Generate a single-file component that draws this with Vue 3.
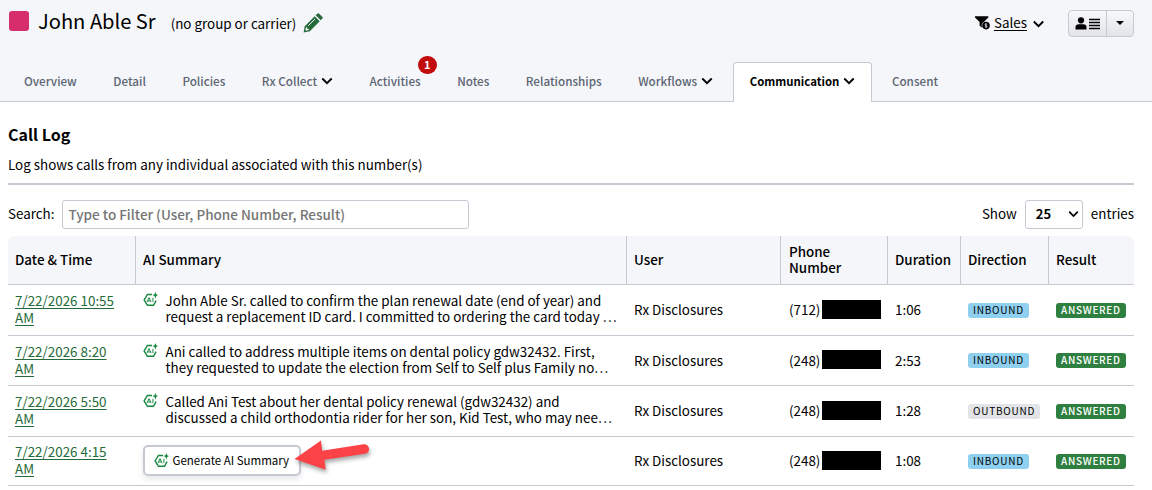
<script setup>
import { ref, computed } from 'vue'

const tabs = [
    { name: 'Overview' },
    { name: 'Detail' },
    { name: 'Policies' },
    { name: 'Rx Collect', menu: true },
    { name: 'Activities', count: 1 },
    { name: 'Notes' },
    { name: 'Relationships' },
    { name: 'Workflows', menu: true },
    { name: 'Communication', menu: true },
    { name: 'Consent' }
]
const activeTab = ref('Communication')
const search = ref('')

const calls = [
    {
        date: '7/22/2026 10:55 AM',
        summary: ['John Able Sr. called to confirm the plan renewal date (end of year) and', 'request a replacement ID card. I committed to ordering the card today …'],
        user: 'Rx Disclosures', area: '(712)', duration: '1:06', direction: 'INBOUND', result: 'ANSWERED'
    },
    {
        date: '7/22/2026 8:20 AM',
        summary: ['Ani called to address multiple items on dental policy gdw32432. First,', 'they requested to update the election from Self to Self plus Family no…'],
        user: 'Rx Disclosures', area: '(248)', duration: '2:53', direction: 'INBOUND', result: 'ANSWERED'
    },
    {
        date: '7/22/2026 5:50 AM',
        summary: ['Called Ani Test about her dental policy renewal (gdw32432) and', 'discussed a child orthodontia rider for her son, Kid Test, who may nee…'],
        user: 'Rx Disclosures', area: '(248)', duration: '1:28', direction: 'OUTBOUND', result: 'ANSWERED'
    },
    {
        date: '7/22/2026 4:15 AM',
        summary: null,
        user: 'Rx Disclosures', area: '(248)', duration: '1:08', direction: 'INBOUND', result: 'ANSWERED'
    }
]

// Filter by user, phone number or result
const filtered = computed(() => {
    const q = search.value.toLowerCase()
    return calls.filter(c => `${c.user} ${c.area} ${c.result}`.toLowerCase().includes(q))
})
</script>

<template>
    <div class="page">
        <svg class="defs" width="0" height="0">
            <symbol id="ai" viewBox="0 0 16 16">
                <path d="M9.600 2.600H4.700L1.200 8.400l3.500 5.800h6.500L14 9.300" fill="none" stroke="currentColor" stroke-width="1.500" />
                <path d="M4.200 10.800l2-4.600h.4l2 4.600M5.100 9.500h2.700M10.600 6.200v4.600" fill="none" stroke="currentColor" stroke-width="1.050" />
                <path d="M13.200 0l.9 2.500 1.900.8-1.900.9-.9 2.900-.9-2.900-2.300-.9 2.300-.8z" fill="currentColor" />
            </symbol>
            <symbol id="chevron" viewBox="0 0 12 8">
                <path d="M1.300 1.500L6 6.200l4.700-4.700" fill="none" stroke="currentColor" stroke-width="1.900" />
            </symbol>
        </svg>

        <header class="top">
            <div class="title-row">
                <span class="swatch"></span>
                <h1>John Able Sr</h1>
                <span class="carrier">(no group or carrier)</span>
                <svg class="pencil" viewBox="0 0 20 20">
                    <path d="M.6 19.400l1.200-6.200L11.700 3.300l5 5-9.900 9.900z" fill="#256b3a" />
                    <path d="M12.700 2.300L14.200.8q1-1 2 0l3 3q1 1 0 2l-1.500 1.500z" fill="#256b3a" />
                    <path d="M3 14.200l1.100.2.300 1.300 1.300.300.200 1.100-2.700.600-.8-.8z" fill="#f5f6f9" />
                    <path d="M5.200 12.800L12 6" stroke="#f5f6f9" stroke-width="1" />
                </svg>
                <div class="actions">
                    <svg class="funnel" viewBox="0 0 15 14">
                        <path d="M0 .3h13.300v1.200L9.300 5.500a4.300 4.300 0 0 0-2 6.300L4.600 9.800V5.900L0 1.500z" fill="#000" />
                        <circle cx="11" cy="9.600" r="3.800" fill="#000" />
                        <path d="M12.200 8.300c-.7-.6-2.200-.5-2.200.4 0 1 2.200.6 2.200 1.700 0 .9-1.600 1-2.400.3M11 7.200v4.800" fill="none" stroke="#f5f6f9" stroke-width=".7" />
                    </svg>
                    <a class="sales">Sales</a>
                    <svg class="chev-sales"><use href="#chevron" /></svg>
                    <div class="btn-group">
                        <button class="btn-main">
                            <svg width="25" height="13" viewBox="0 0 25 13">
                                <circle cx="6" cy="3.300" r="3.100" />
                                <path d="M.5 12.500v-2q0-3.200 3.300-3.200h4.400q3.300 0 3.300 3.200v2z" />
                                <path d="M14 2.500h11M14 5.500h11M14 8.500h11M14 11.500h11" stroke="#000" stroke-width="1.400" />
                            </svg>
                        </button>
                        <button class="btn-drop"><span class="caret"></span></button>
                    </div>
                </div>
            </div>

            <nav class="tabs">
                <a v-for="tab in tabs" :key="tab.name" class="tab" :class="{ active: tab.name === activeTab }" @click="activeTab = tab.name">
                    {{ tab.name }}
                    <svg v-if="tab.menu" class="chev"><use href="#chevron" /></svg>
                    <span v-if="tab.count" class="count">{{ tab.count }}</span>
                </a>
            </nav>
        </header>

        <main>
            <h2>Call Log</h2>
            <p class="intro">Log shows calls from any individual associated with this number(s)</p>

            <div class="controls">
                <label for="search">Search:</label>
                <input id="search" v-model="search" placeholder="Type to Filter (User, Phone Number, Result)">
                <div class="entries">
                    <span>Show</span>
                    <div class="select">25 <svg class="chev-select"><use href="#chevron" /></svg></div>
                    <span>entries</span>
                </div>
            </div>

            <table>
                <colgroup>
                    <col class="c-date"><col class="c-summary"><col class="c-user"><col class="c-phone"><col class="c-duration"><col class="c-direction"><col class="c-result">
                </colgroup>
                <thead>
                    <tr>
                        <th>Date &amp; Time</th>
                        <th>AI Summary</th>
                        <th>User</th>
                        <th class="phone-cell">Phone<br>Number</th>
                        <th>Duration</th>
                        <th>Direction</th>
                        <th>Result</th>
                    </tr>
                </thead>
                <tbody>
                    <tr v-for="call in filtered" :key="call.date">
                        <td><a class="date">{{ call.date }}</a></td>
                        <td>
                            <div v-if="call.summary" class="summary">
                                <svg class="ai"><use href="#ai" /></svg>
                                <div>{{ call.summary[0] }}<br>{{ call.summary[1] }}</div>
                            </div>
                            <div v-else class="generate-wrap">
                                <button class="generate"><svg class="ai"><use href="#ai" /></svg>Generate AI Summary</button>
                                <svg class="arrow" viewBox="0 0 78 32">
                                    <path d="M.5 19L27 .5l1.200 10.200L69.500 4.300a4.800 4.800 0 0 1 1.500 9.500L30.500 19.800l1.200 10z" fill="#fb4246" />
                                </svg>
                            </div>
                        </td>
                        <td>{{ call.user }}</td>
                        <td class="phone-cell"><div class="phone">{{ call.area }}<span class="redacted"></span></div></td>
                        <td>{{ call.duration }}</td>
                        <td><span class="badge" :class="call.direction.toLowerCase()">{{ call.direction }}</span></td>
                        <td><span class="badge answered">{{ call.result }}</span></td>
                    </tr>
                </tbody>
            </table>
        </main>
    </div>
</template>

<style>
body {
    background: #fff;
    overflow: hidden;
}
</style>

<style scoped>
.page {
    font-family: "Noto Sans CJK SC", "Noto Sans", sans-serif;
    font-size: 13.4px;
    line-height: 16px;
    color: #000;
    height: 490px;
    overflow: hidden;
}

* {
    box-sizing: border-box;
}

.defs {
    position: absolute;
}

.top {
    background: #f5f6f9;
    height: 102px;
    border-bottom: 1px solid #c5c9d2;
    display: flex;
    flex-direction: column;
    justify-content: space-between;
}

.title-row {
    display: flex;
    align-items: center;
    height: 46px;
    padding: 0 18px 0 9px;
}

.swatch {
    width: 20px;
    height: 20px;
    border-radius: 3px;
    background: #d62e6d;
    margin-top: -4px;
}

h1 {
    font-size: 20.1px;
    font-weight: 400;
    line-height: 28px;
    margin: -5px 15px 0 9px;
}

.carrier {
    font-size: 13.4px;
}

.pencil {
    width: 20px;
    height: 20px;
    margin-left: 7px;
}

.actions {
    display: flex;
    align-items: center;
    margin-left: auto;
}

.funnel {
    width: 15px;
    height: 14px;
    margin-right: 4px;
}

.sales {
    border-bottom: 1px solid #000;
    line-height: 15px;
}

.chev-sales {
    width: 13px;
    height: 8px;
    margin: 2px 23px 0 5px;
}

.btn-group {
    display: flex;
    height: 27px;
    border: 1px solid #c5c9d2;
    border-radius: 4px;
    background: linear-gradient(#f7f8fa, #e2e4e8);
}

.btn-group button {
    border: 0;
    padding: 0;
    background: none;
    display: flex;
    align-items: center;
    justify-content: center;
}

.btn-group .btn-main {
    width: 38px;
    border-right: 1px solid #c5c9d2;
}

.btn-group .btn-drop {
    width: 26px;
}

.caret {
    border: 4px solid transparent;
    border-top-color: #000;
    border-bottom: 0;
}

.tabs {
    display: flex;
    gap: 2.5px;
    padding-left: 7px;
    margin-bottom: -1px;
}

.tab {
    position: relative;
    display: flex;
    align-items: center;
    height: 40px;
    padding: 0 16px 3px;
    border: 1px solid transparent;
    border-bottom: 0;
    font-size: 11.7px;
    font-weight: 500;
    color: #5c6573;
    cursor: pointer;
}

.tab.active {
    background: #fff;
    border-color: #c5c9d2;
    border-radius: 4px 4px 0 0;
    color: #000;
    font-weight: 700;
    font-size: 11.4px;
}

.chev {
    width: 12px;
    height: 8px;
    margin-left: 4px;
    color: #000;
}

.count {
    position: absolute;
    top: -7px;
    right: 0;
    width: 19px;
    height: 18px;
    border-radius: 9px;
    background: #c20c0c;
    color: #fff;
    font-size: 11px;
    font-weight: 700;
    line-height: 17px;
    text-align: center;
}

main {
    padding: 0 18px 0 8px;
}

h2 {
    font-size: 16px;
    font-weight: 700;
    line-height: 24px;
    margin: 0;
    padding-top: 20px;
}

.intro {
    margin: 0;
    padding: 10px 0 11px;
    border-bottom: 2px solid #c5c9d2;
}

.controls {
    display: flex;
    align-items: center;
    padding: 15px 0 7px;
}

.controls label,
.entries span {
    padding-bottom: 3px;
}

input {
    width: 407px;
    height: 29px;
    margin-left: 8px;
    padding: 0 5px 1px;
    border: 1px solid #c5c9d2;
    border-radius: 3px;
    font: 500 13.5px "Noto Sans CJK SC", sans-serif;
}

input::placeholder {
    color: #757575;
}

.entries {
    display: flex;
    align-items: center;
    gap: 8px;
    margin-left: auto;
}

.select {
    display: flex;
    align-items: center;
    justify-content: space-between;
    width: 58px;
    height: 29px;
    padding: 0 3px 1px 10px;
    border: 1px solid #c5c9d2;
    border-radius: 3px;
    font-weight: 700;
    font-size: 13px;
}

.chev-select {
    width: 11px;
    height: 8px;
}

table {
    width: 1126px;
    table-layout: fixed;
    border-spacing: 0;
}

.c-date { width: 128px; }
.c-summary { width: 491px; }
.c-user { width: 154px; }
.c-phone { width: 107px; }
.c-duration { width: 73px; }
.c-direction { width: 88px; }
.c-result { width: 85px; }

th {
    height: 49px;
    padding: 0 7px 2px;
    background: #f5f6f9;
    border-right: 1px solid #c5c9d2;
    border-bottom: 1px solid #c5c9d2;
    text-align: left;
    font-size: 13.4px;
    font-weight: 500;
}

th:first-child {
    border-top-left-radius: 6px;
}

th:last-child {
    border-right: 0;
    border-top-right-radius: 6px;
}

td {
    height: 51px;
    padding: 0 7px 2px;
    border-bottom: 1px solid #c5c9d2;
}

tr:nth-child(2) td {
    height: 50px;
}

tr:nth-child(4) td {
    height: 49px;
}

td.phone-cell,
th.phone-cell {
    padding-left: 8px;
}

.date {
    display: inline-block;
    width: 104px;
    line-height: 17px;
    color: #256b3a;
    text-decoration: underline;
    text-underline-offset: 2px;
}

.summary {
    display: flex;
    padding-bottom: 2px;
    white-space: nowrap;
}

.ai {
    width: 15px;
    height: 15px;
    color: #16883f;
    flex: none;
}

.summary .ai {
    margin-right: 7.5px;
}

.generate-wrap {
    position: relative;
}

.generate {
    display: flex;
    align-items: center;
    gap: 4px;
    width: 158px;
    height: 31px;
    padding: 0 8px 0 8.5px;
    border: 2px solid #c5c9d2;
    border-radius: 5px;
    background: #fff;
    box-shadow: 0 3px 6px rgba(0, 0, 0, .1);
    font: 400 11.5px "Noto Sans CJK SC", sans-serif;
    color: #000;
    white-space: nowrap;
}

.arrow {
    position: absolute;
    left: 151px;
    top: -5px;
    width: 78px;
    height: 32px;
    overflow: visible;
    filter: drop-shadow(1px 3px 2px rgba(0, 0, 0, .35));
}

.phone {
    display: flex;
    align-items: center;
    justify-content: space-between;
    margin-right: -1px;
}

.redacted {
    width: 59px;
    height: 19px;
    margin-right: 1px;
    background: #000;
}

.badge {
    display: inline-block;
    height: 15px;
    padding: 0 5px;
    border-radius: 3px;
    font-size: 10px;
    line-height: 14px;
    letter-spacing: .78px;
    vertical-align: middle;
}

.inbound {
    background: #8fd0f0;
}

.outbound {
    background: #e2e4e8;
}

.answered {
    background: #2f8040;
    color: #fff;
    font-weight: 500;
    letter-spacing: .7px;
}
</style>
